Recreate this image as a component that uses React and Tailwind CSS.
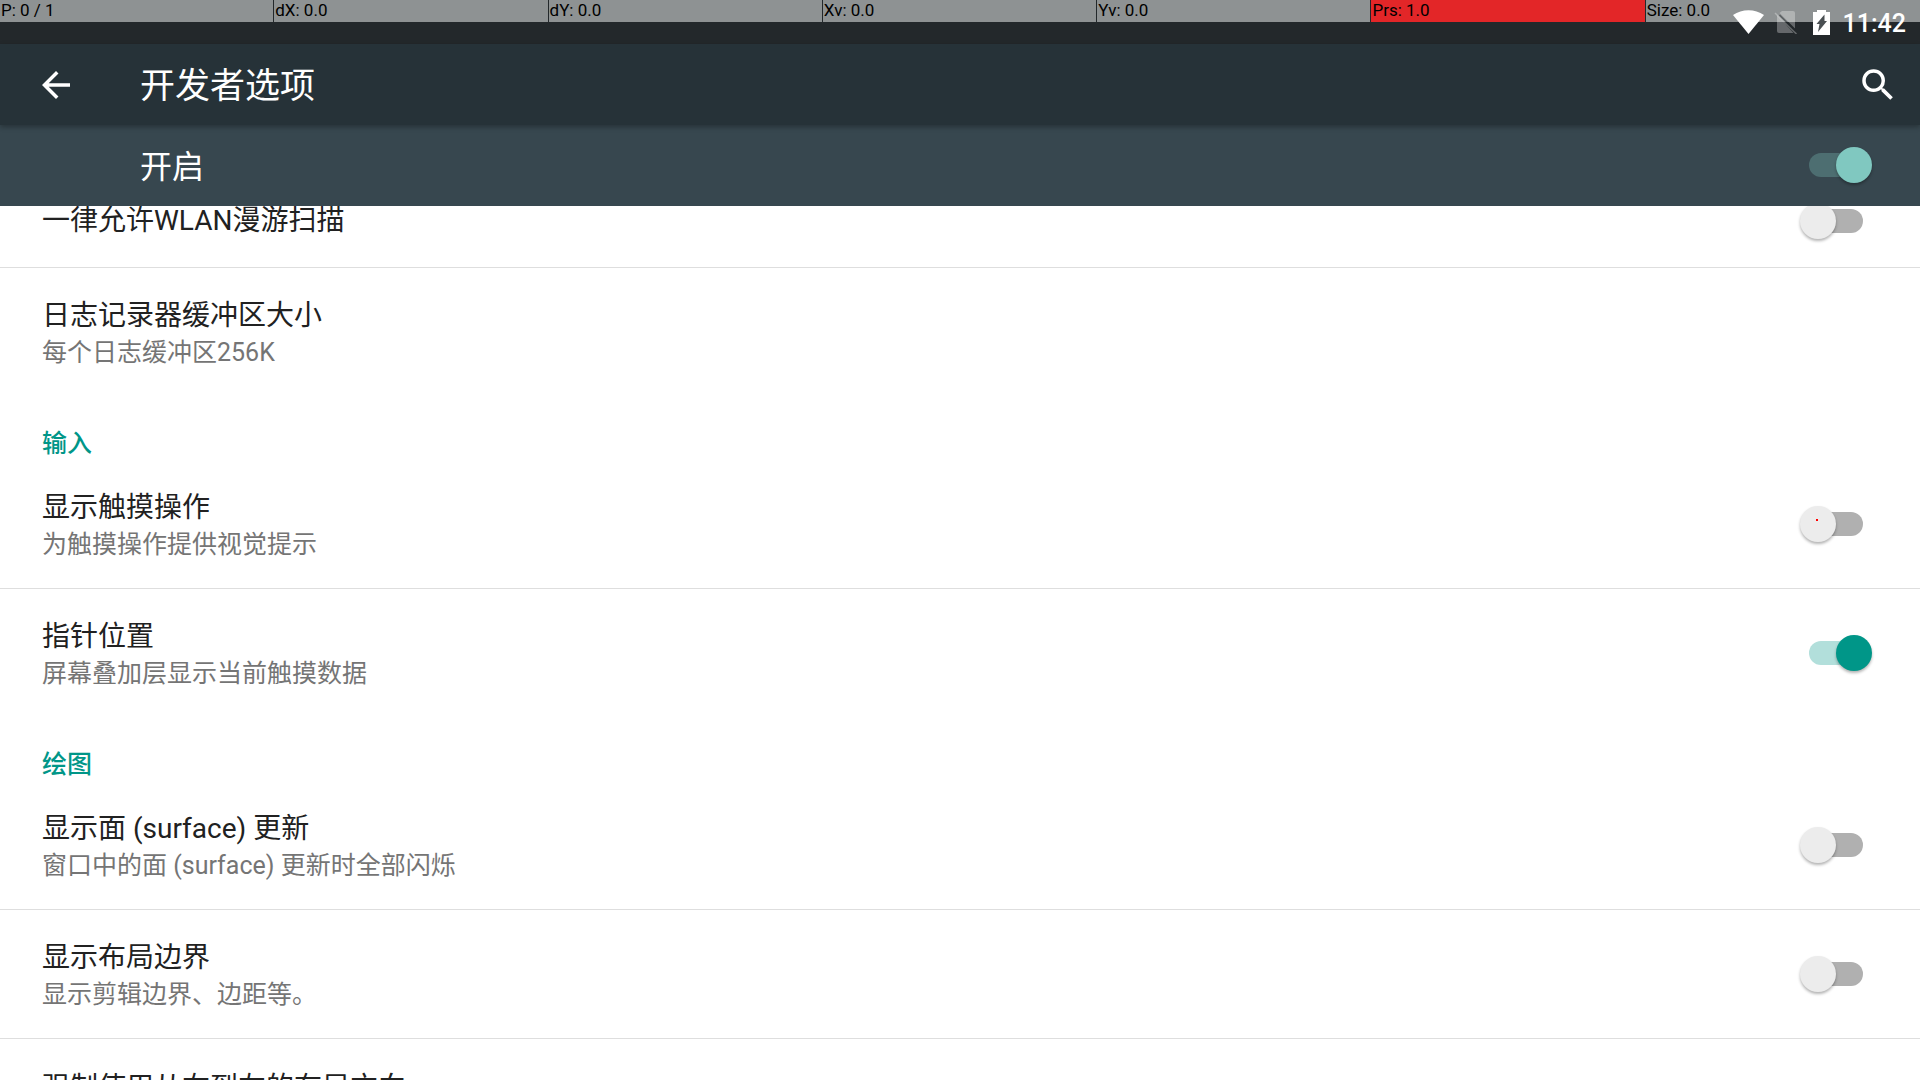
import { useState } from "react";

const FONT = "font-[Roboto,'Noto_Sans_CJK_SC',sans-serif]";

const pointerCells = [
  { label: "P: 0 / 1" },
  { label: "dX: 0.0" },
  { label: "dY: 0.0" },
  { label: "Xv: 0.0" },
  { label: "Yv: 0.0" },
  { label: "Prs: 1.0", active: true },
  { label: "Size: 0.0" },
];

// Settings list, grouped the way the screen shows them
const sections = [
  {
    id: "debug",
    items: [
      { id: "wlan-scan", title: "一律允许WLAN漫游扫描", toggle: true },
      { id: "logger", title: "日志记录器缓冲区大小", summary: "每个日志缓冲区256K" },
    ],
  },
  {
    id: "input",
    heading: "输入",
    items: [
      { id: "show-touches", title: "显示触摸操作", summary: "为触摸操作提供视觉提示", toggle: true },
      { id: "pointer", title: "指针位置", summary: "屏幕叠加层显示当前触摸数据", toggle: true },
    ],
  },
  {
    id: "drawing",
    heading: "绘图",
    items: [
      { id: "surface", title: "显示面 (surface) 更新", summary: "窗口中的面 (surface) 更新时全部闪烁", toggle: true },
      { id: "bounds", title: "显示布局边界", summary: "显示剪辑边界、边距等。", toggle: true },
      { id: "rtl", title: "强制使用从右到左的布局方向" },
    ],
  },
];

function PointerBar() {
  return (
    <div className="grid h-[22px] grid-cols-7 text-[17px] leading-[21px] text-black">
      {pointerCells.map((cell, i) => (
        <div
          key={cell.label}
          className={`pl-px ${cell.active ? "bg-[#e32628]" : "bg-[#8e9293]"} ${
            i < pointerCells.length - 1 ? "border-r border-[#23282b]" : ""
          }`}
        >
          {cell.label}
        </div>
      ))}
    </div>
  );
}

function StatusIcons() {
  return (
    <div className="absolute top-0 right-[14px] flex h-11 items-center text-white">
      {/* wifi */}
      <svg className="h-6 w-[31px]" viewBox="0 0 31 24" fill="currentColor" aria-hidden="true">
        <path d="M0 5C9-1.500 22-1.500 31 5L15.500 24Z" />
      </svg>
      {/* no sim */}
      <svg className="ml-[10px] h-6 w-6" viewBox="0 0 24 24" aria-hidden="true">
        <path d="M8 1h11a2 2 0 0 1 2 2v15.500L5.500 3z" fill="#fff" opacity="0.3" />
        <path d="M3 5v16a2 2 0 0 0 2 2h14.500z" fill="#fff" opacity="0.3" />
        <path d="M1 3l21.500 21" stroke="#fff" strokeOpacity="0.3" strokeWidth="1.500" />
        <path d="M5.500 5l16 16" stroke="#23282b" strokeOpacity="0.5" strokeWidth="1.500" />
      </svg>
      {/* battery charging */}
      <svg className="ml-[15px] h-[25px] w-[17px]" viewBox="0 0 17 25" aria-hidden="true">
        <path d="M4 0h9v2h4v23H0V2h4z" fill="#fff" />
        <path d="M11.500 4.500v6.500h2.500L5 22l1.500-8H3.500z" fill="#4a4f52" />
      </svg>
      <span className="ml-[13px] pt-[3px] text-[25px] leading-[44px] font-medium">11:42</span>
    </div>
  );
}

function Switch({ id, checked, onChange, dark }) {
  const offColors = "before:bg-[#b0b0b0] after:bg-[#ececec]";
  const onColors = dark
    ? "before:bg-[#4d6e71] after:bg-[#80c8c0]"
    : "before:bg-[#b2dfdb] after:bg-[#009688]";

  return (
    <input
      id={id}
      type="checkbox"
      role="switch"
      checked={checked}
      onChange={onChange}
      className={`relative h-9 w-[72px] shrink-0 cursor-pointer appearance-none before:absolute before:top-[6px] before:left-[9px] before:h-6 before:w-[54px] before:rounded-full after:absolute after:top-0 after:size-9 after:rounded-full after:shadow-[0_2px_3px_rgba(0,0,0,0.3)] ${
        checked ? `after:left-9 ${onColors}` : `after:left-0 ${offColors}`
      }`}
    />
  );
}

function PreferenceText({ item }) {
  return (
    <>
      <span className="block text-[28px] leading-[38px] text-[#212121]">{item.title}</span>
      {item.summary && (
        <span className="block text-[25px] leading-9 text-[#757575]">{item.summary}</span>
      )}
    </>
  );
}

function Preference({ item, checked, onToggle }) {
  return (
    <li className="flex min-h-[93px] items-center justify-between border-b border-[#dedede] py-[25px] pr-12 pl-[42px] last:border-b-0">
      {item.toggle ? (
        <>
          <label htmlFor={item.id} className={`grow cursor-pointer ${item.summary ? "pt-1" : ""}`}>
            <PreferenceText item={item} />
          </label>
          <Switch id={item.id} checked={checked} onChange={() => onToggle(item.id)} />
        </>
      ) : (
        <button type="button" className="grow cursor-pointer pt-1 text-left">
          <PreferenceText item={item} />
        </button>
      )}
    </li>
  );
}

export default function App() {
  const [enabled, setEnabled] = useState(true);
  const [values, setValues] = useState({ pointer: true });

  const toggle = (id) => setValues((prev) => ({ ...prev, [id]: !prev[id] }));

  return (
    <div className={`relative flex h-screen flex-col overflow-hidden bg-white ${FONT}`}>
      <div className="relative h-11 shrink-0 bg-[#23282b]">
        <PointerBar />
        <StatusIcons />
      </div>

      <header className="relative z-20 flex h-[81px] shrink-0 items-center bg-[#263238] pr-[21px] pl-8 text-white shadow-[0_2px_5px_rgba(0,0,0,0.3)]">
        <button type="button" aria-label="返回" className="cursor-pointer p-[3px]">
          <svg className="size-[42px]" viewBox="0 0 24 24" fill="currentColor" aria-hidden="true">
            <path d="M20 11H7.830l5.590-5.590L12 4l-8 8 8 8 1.410-1.410L7.830 13H20v-2z" />
          </svg>
        </button>
        <h1 className="grow pt-1 pl-[60px] text-[35px] leading-[48px]">开发者选项</h1>
        <button type="button" aria-label="搜索" className="cursor-pointer">
          <svg className="size-[42px]" viewBox="0 0 24 24" fill="currentColor" aria-hidden="true">
            <path d="M15.500 14h-.79l-.28-.27A6.471 6.471 0 0 0 16 9.500 6.500 6.500 0 1 0 9.500 16c1.610 0 3.090-.59 4.230-1.570l.27.28v.79l5 4.990L20.490 19l-4.990-5zm-6 0C7.010 14 5 11.990 5 9.500S7.010 5 9.500 5 14 7.010 14 9.500 11.990 14 9.500 14z" />
          </svg>
        </button>
      </header>

      <div className="relative z-10 flex h-[81px] shrink-0 items-center bg-[#37474f] pr-12 pb-px pl-[140px] text-white">
        <label htmlFor="master" className="grow pt-1 text-[32px] leading-[48px]">
          开启
        </label>
        <Switch id="master" dark checked={enabled} onChange={() => setEnabled(!enabled)} />
      </div>

      {/* List is scrolled a little, so the first row slides under the bar */}
      <main className="-mt-[31px]">
        {sections.map((section) => (
          <section key={section.id}>
            {section.heading && (
              <h2 className="pt-[31px] pl-[42px] text-[25px] leading-[33px] font-medium text-[#009688]">
                {section.heading}
              </h2>
            )}
            <ul>
              {section.items.map((item) => (
                <Preference
                  key={item.id}
                  item={item}
                  checked={!!values[item.id]}
                  onToggle={toggle}
                />
              ))}
            </ul>
          </section>
        ))}
      </main>

      {/* Last touch point of the pointer overlay */}
      <span className="absolute top-[519px] right-[102px] z-30 size-[2px] bg-[#ff0000]" />
    </div>
  );
}
